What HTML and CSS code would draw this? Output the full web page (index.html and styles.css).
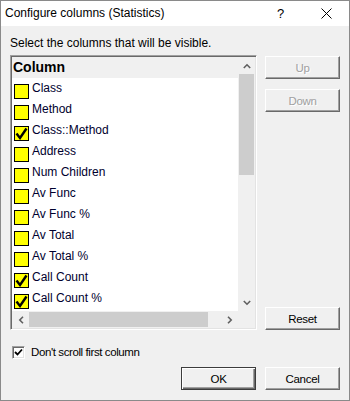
FILE: index.html
```html
<!DOCTYPE html>
<html>
<head>
<meta charset="utf-8">
<link rel="stylesheet" href="styles.css">
</head>
<body>
<div class="window">
  <div class="titlebar">
    <span class="title">Configure columns (Statistics)</span>
    <span class="tb-btn help">?</span>
    <span class="tb-btn close"><svg width="11" height="11" viewBox="0 0 11 11"><path d="M0.5 0.5L10.5 10.5M10.5 0.5L0.5 10.5" stroke="#000" stroke-width="1" fill="none"/></svg></span>
  </div>
  <div class="client">
    <div class="prompt">Select the columns that will be visible.</div>
    <div class="main">
      <div class="listbox">
        <div class="list-view">
          <div class="list-header">Column</div>
          <div class="row"><span class="cb"></span><span class="label">Class</span></div>
          <div class="row"><span class="cb"></span><span class="label">Method</span></div>
          <div class="row"><span class="cb"><svg class="tick" width="13" height="13" viewBox="0 0 13 13"><path d="M1.5 6.5L5 11L11.5 1.5" stroke="#000" stroke-width="2.4" fill="none"/></svg></span><span class="label">Class::Method</span></div>
          <div class="row"><span class="cb"></span><span class="label">Address</span></div>
          <div class="row"><span class="cb"></span><span class="label">Num Children</span></div>
          <div class="row"><span class="cb"></span><span class="label">Av Func</span></div>
          <div class="row"><span class="cb"></span><span class="label">Av Func %</span></div>
          <div class="row"><span class="cb"></span><span class="label">Av Total</span></div>
          <div class="row"><span class="cb"></span><span class="label">Av Total %</span></div>
          <div class="row"><span class="cb"><svg class="tick" width="13" height="13" viewBox="0 0 13 13"><path d="M1.5 6.5L5 11L11.5 1.5" stroke="#000" stroke-width="2.4" fill="none"/></svg></span><span class="label">Call Count</span></div>
          <div class="row"><span class="cb"><svg class="tick" width="13" height="13" viewBox="0 0 13 13"><path d="M1.5 6.5L5 11L11.5 1.5" stroke="#000" stroke-width="2.4" fill="none"/></svg></span><span class="label">Call Count %</span></div>
        </div>
        <div class="vscroll">
          <div class="arrow"><svg width="8" height="6" viewBox="0 0 8 6"><path d="M0.8 5L4 1.8L7.2 5" stroke="#606060" stroke-width="1.6" fill="none"/></svg></div>
          <div class="vthumb"></div>
          <div class="spacer"></div>
          <div class="arrow"><svg width="8" height="6" viewBox="0 0 8 6"><path d="M0.8 1L4 4.2L7.2 1" stroke="#606060" stroke-width="1.6" fill="none"/></svg></div>
        </div>
        <div class="hscroll">
          <div class="arrow"><svg width="6" height="8" viewBox="0 0 6 8"><path d="M5 0.8L1.8 4L5 7.2" stroke="#606060" stroke-width="1.6" fill="none"/></svg></div>
          <div class="hthumb"></div>
          <div class="spacer"></div>
          <div class="arrow"><svg width="6" height="8" viewBox="0 0 6 8"><path d="M1 0.8L4.2 4L1 7.2" stroke="#606060" stroke-width="1.6" fill="none"/></svg></div>
        </div>
        <div class="corner"></div>
      </div>
      <div class="side">
        <button class="btn disabled">Up</button>
        <button class="btn disabled">Down</button>
        <button class="btn reset">Reset</button>
      </div>
    </div>
    <div class="option">
      <span class="check3d"><svg width="9" height="9" viewBox="0 0 9 9"><path d="M1 4L3.5 6.5L8 1.5" stroke="#000" stroke-width="1.8" fill="none"/></svg></span>
      <span class="option-text">Don't scroll first column</span>
    </div>
    <div class="footer">
      <button class="btn default">OK</button>
      <button class="btn">Cancel</button>
    </div>
  </div>
</div>
</body>
</html>
```
FILE: styles.css
```css
* { box-sizing: border-box; }
body { margin: 0; background: #fff; }
.window {
  width: 350px; height: 401px;
  border: 1px solid #8a8a8a;
  background: #f0f0f0;
  display: flex; flex-direction: column;
  font-family: "Liberation Sans", Arial, sans-serif;
  color: #000;
}
.titlebar { height: 25px; background: #fff; display: flex; align-items: center; flex-shrink: 0; }
.title { flex: 1; padding-left: 4px; font-size: 12px; line-height: 15px; }
.tb-btn { width: 46px; height: 25px; display: flex; align-items: center; justify-content: center; }
.help { font-size: 13px; line-height: 15px; padding-left: 1px; }
.close svg { display: block; margin-top: -1px; }
.client { flex: 1; padding: 0 9px 0 9px; display: flex; flex-direction: column; }
.prompt { margin-top: 10px; margin-bottom: 4px; font-size: 12px; line-height: 15px; }
.main { display: flex; gap: 8px; height: 275px; }
.listbox {
  width: 247px; height: 275px;
  display: grid; grid-template-columns: 1fr 17px; grid-template-rows: 1fr 17px;
  border: 1px solid; border-color: #a0a0a0 #fff #fff #a0a0a0;
  box-shadow: inset 1px 1px #696969, inset -1px -1px #e3e3e3;
  padding: 1px; background: #fff;
}
.list-view { overflow: hidden; background: #fff; }
.list-header { height: 21px; background: #f0f0f0; font-weight: bold; font-size: 14px; line-height: 21px; padding-left: 1px; }
.row { height: 21px; display: flex; align-items: flex-start; padding-left: 2px; }
.cb { width: 15px; height: 15px; margin-top: 6px; background: #ffff00; border: 1px solid #000; flex-shrink: 0; }
.tick { display: block; }
.label { margin-left: 3px; padding-top: 3px; font-size: 12px; line-height: 15px; color: #00002e; }
.vscroll { background: #f0f0f0; display: flex; flex-direction: column; }
.vscroll .arrow { height: 17px; display: flex; align-items: center; justify-content: center; }
.vthumb { height: 101px; margin: 0 1px; background: #cdcdcd; }
.spacer { flex: 1; }
.hscroll { background: #f0f0f0; display: flex; }
.hscroll .arrow { width: 17px; display: flex; align-items: center; justify-content: center; }
.hthumb { width: 179px; margin: 1px 0; background: #cdcdcd; }
.corner { background: #f0f0f0; }
.arrow svg { display: block; }
.side { width: 75px; display: flex; flex-direction: column; gap: 10px; padding-top: 1px; }
.btn {
  width: 75px; height: 23px; padding: 0;
  font-family: "Liberation Sans", Arial, sans-serif; font-size: 11.5px; letter-spacing: -0.3px;
  color: #000; background: #f0f0f0;
  border: 1px solid; border-color: #fff #696969 #696969 #fff;
  box-shadow: inset -1px -1px #a0a0a0;
}
.btn.disabled { color: #a0a0a0; text-shadow: 1px 1px #fff; }
.btn.reset { margin-top: auto; }
.btn.default {
  border-color: #3c3c3c;
  box-shadow: inset 1px 1px #fff, inset -1px -1px #696969, inset -2px -2px #a0a0a0;
}
.option { margin-top: 16px; display: flex; align-items: center; gap: 6px; padding-left: 2px; height: 13px; }
.check3d {
  width: 13px; height: 13px; background: #fff; padding: 1px;
  border: 1px solid; border-color: #a0a0a0 #fff #fff #a0a0a0;
  box-shadow: inset 1px 1px #696969, inset -1px -1px #e3e3e3;
  display: flex; align-items: center; justify-content: center;
}
.check3d svg { display: block; }
.option-text { font-size: 11.5px; letter-spacing: -0.4px; line-height: 15px; }
.footer { margin-top: 8px; display: flex; justify-content: flex-end; gap: 9px; }
```
